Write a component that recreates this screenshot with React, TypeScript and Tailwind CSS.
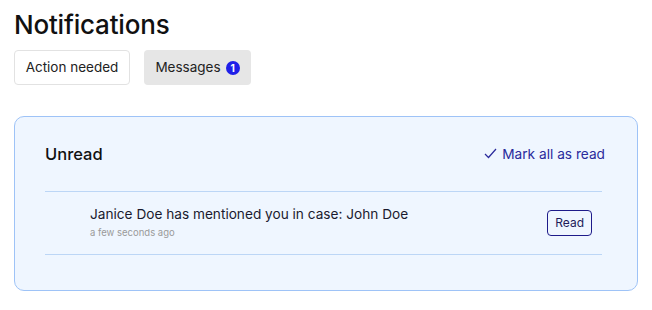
export default function App() {
  return (
    <div className="w-[652px] h-[310px] bg-white px-[14px] pt-[8px] font-['Inter','Lato',sans-serif] text-[#111]">
      {/* Header */}
      <h1 className="text-[26px] leading-[34px] font-medium tracking-[-0.2px]">Notifications</h1>

      {/* Tabs */}
      <div className="mt-[8px] flex gap-[14px]">
        <button className="h-[35px] w-[116px] rounded-[4px] border border-[#e2e2e2] bg-white text-[13.5px] text-[#222]">
          Action needed
        </button>
        <button className="h-[35px] w-[107px] rounded-[4px] bg-[#e6e6e6] text-[13.5px] text-[#222] flex items-center justify-center gap-[5px]">
          Messages
          <span className="w-[14px] h-[14px] rounded-full bg-[#1f1fe8] text-white text-[10px] font-bold flex items-center justify-center leading-none">
            1
          </span>
        </button>
      </div>

      {/* Unread card */}
      <div className="mt-[31px] w-[624px] h-[175px] rounded-[10px] border border-[#9ec3f7] bg-[#eff6ff] pl-[30px] pr-[35px]">
        <div className="h-[75px] flex items-center justify-between border-b border-[#bcd6f6]">
          <h2 className="text-[16.5px] font-medium text-[#111]">Unread</h2>
          <button className="-mr-[3px] flex items-center gap-[5px] text-[13.7px] text-[#2a2a9c]">
            <svg width="13" height="11" viewBox="0 0 13 11" fill="none" stroke="#2a2a9c" strokeWidth="1.2">
              <path d="M1 6l3.5 3.5L12 1" />
            </svg>
            Mark all as read
          </button>
        </div>
        <div className="h-[63px] flex items-center justify-between pl-[45px] pr-[10px] border-b border-[#bcd6f6]">
          <div className="pb-[3px]">
            <p className="text-[13.65px] leading-[20px] text-[#1a1a2e]">Janice Doe has mentioned you in case: John Doe</p>
            <p className="text-[9.5px] leading-[14px] mt-[2px] text-[#9a9a9a]">a few seconds ago</p>
          </div>
          <button className="h-[26px] px-[7px] rounded-[4px] border border-[#1e1b8a] text-[12px] text-[#1e1b5a] bg-transparent">
            Read
          </button>
        </div>
      </div>
    </div>
  );
}
